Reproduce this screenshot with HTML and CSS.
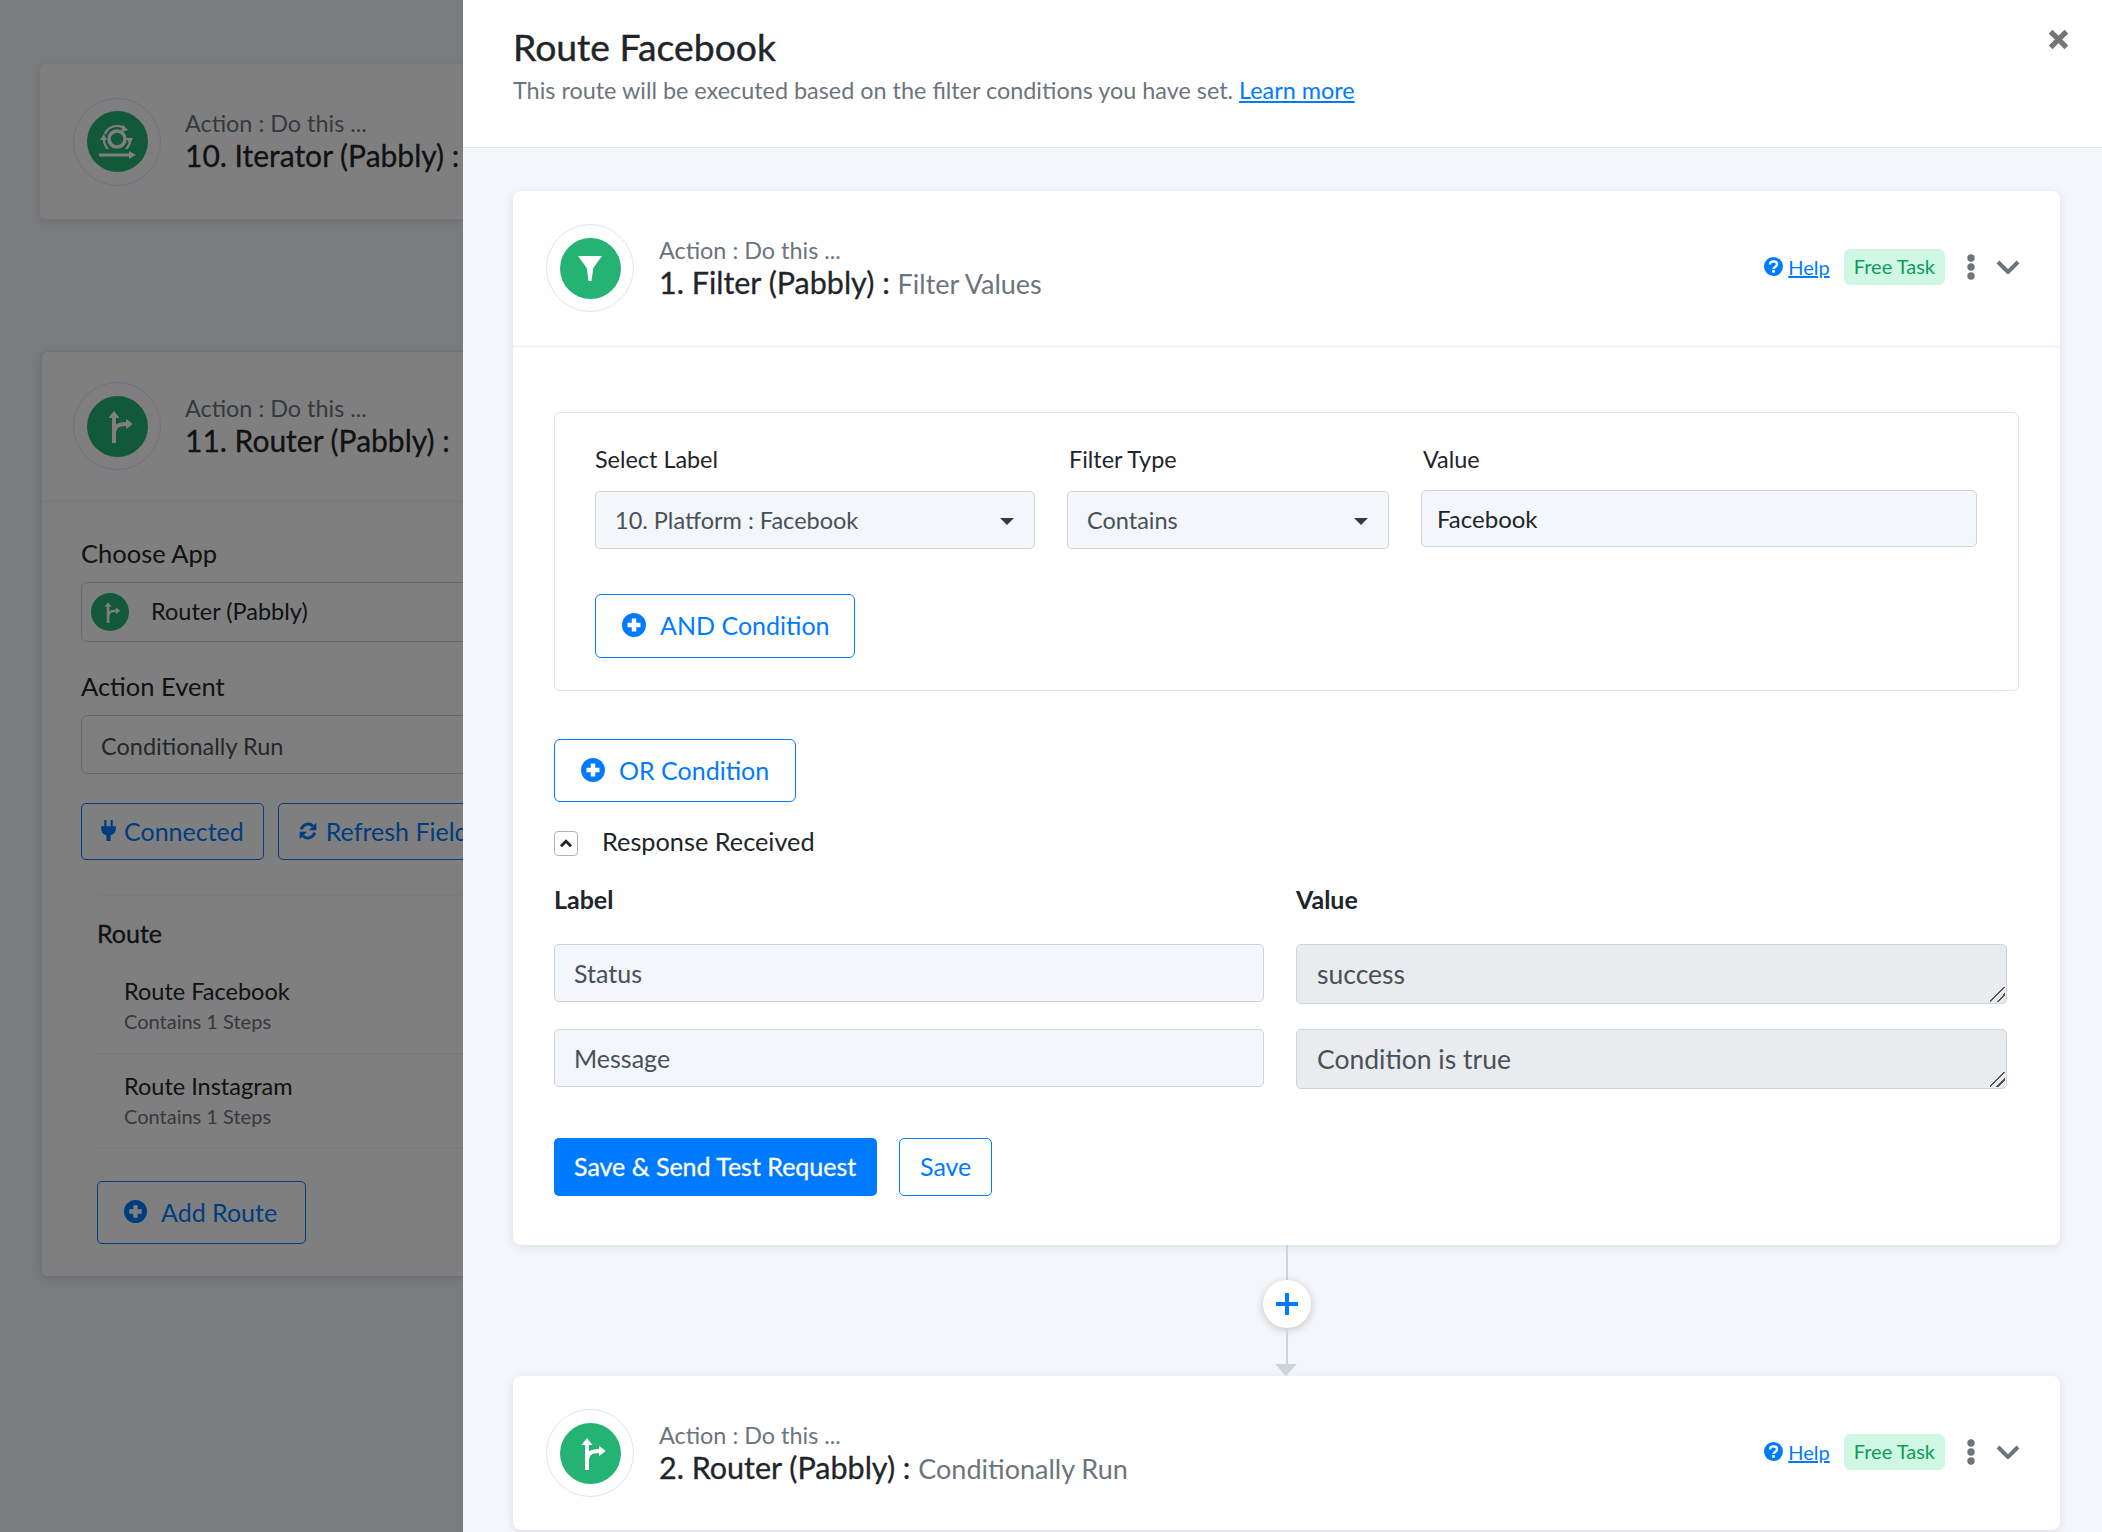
FILE: index.html
```html
<!DOCTYPE html>
<html>
    <head>
        <meta charset="utf-8">
        <title>Route Facebook</title>
        <link rel="stylesheet" href="styles.css">
    </head>
    <body>
        <svg class="defs" width="0" height="0">
            <symbol id="i-router" viewBox="-15 -17 30 34">
                <path d="M-3-9V17M-3 9C-3 0 1-2 9-2" fill="none" stroke="#fff" stroke-width="4"/>
                <path d="M-3-15l5.500 7h-11zM9-7l7 5-7 5z" fill="#fff"/>
            </symbol>
            <symbol id="i-iterator" viewBox="0 0 38 34">
                <circle cx="19" cy="14" r="8" fill="none" stroke="#fff" stroke-width="3.500"/>
                <path d="M7 9A13 13 0 0 1 26 3M32 13A13 13 0 0 1 28 24M10 24A13 13 0 0 1 6 15" fill="none" stroke="#fff" stroke-width="2.200"/>
                <path d="M25 0l5 5-7 2zM28 13h7l-3 6zM2 15h7l-3-6z" fill="#fff"/>
                <path d="M1 30h31" stroke="#fff" stroke-width="3"/>
                <path d="M31 26l7 4-7 4z" fill="#fff"/>
            </symbol>
            <symbol id="i-plus" viewBox="0 0 24 24">
                <circle cx="12" cy="12" r="12" fill="#007bff"/>
                <path d="M12 5.500v13M5.500 12h13" stroke="#fff" stroke-width="4.500"/>
            </symbol>
            <symbol id="i-help" viewBox="0 0 24 24">
                <circle cx="12" cy="12" r="12" fill="#007bff"/>
                <path d="M7.500 9.500C7.500 7 9.500 5.500 12 5.500s4.500 1.500 4.500 3.800c0 3.200-4.500 3.200-4.500 5.700" fill="none" stroke="#fff" stroke-width="3"/>
                <rect x="10.300" y="16.500" width="3.400" height="3.400" fill="#fff"/>
            </symbol>
            <symbol id="i-more" viewBox="0 0 10 26">
                <circle cx="5" cy="4" r="3.700" fill="#6c757d"/>
                <circle cx="5" cy="13" r="3.700" fill="#6c757d"/>
                <circle cx="5" cy="22" r="3.700" fill="#6c757d"/>
            </symbol>
            <symbol id="i-chevron" viewBox="0 0 24 14">
                <path d="M2 2l10 10L22 2" fill="none" stroke="#6c757d" stroke-width="4"/>
            </symbol>
        </svg>

        <!-- page behind the drawer -->
        <main class="page">
            <section class="flow-card">
                <div class="flow-head">
                    <div class="ring"><span class="app-icon dark"><svg width="38" height="34"><use href="#i-iterator"/></svg></span></div>
                    <div class="head-text">
                        <div class="head-small">Action : Do this ...</div>
                        <div class="head-title">10. Iterator (Pabbly) :</div>
                    </div>
                </div>
            </section>
            <section class="flow-card second">
                <div class="flow-head ruled">
                    <div class="ring"><span class="app-icon dark"><svg width="30" height="34"><use href="#i-router"/></svg></span></div>
                    <div class="head-text">
                        <div class="head-small">Action : Do this ...</div>
                        <div class="head-title">11. Router (Pabbly) :</div>
                    </div>
                </div>
                <div class="flow-body">
                    <div class="page-label">Choose App</div>
                    <div class="page-field app">
                        <span class="mini-icon"><svg width="20" height="22"><use href="#i-router"/></svg></span>
                        <span class="app-name">Router (Pabbly)</span>
                    </div>
                    <div class="page-label">Action Event</div>
                    <div class="page-field muted">Conditionally Run</div>
                    <div class="page-actions">
                        <a class="page-btn">
                            <svg width="15" height="21" viewBox="0 0 14 20"><path d="M3 0h2v6H3zM9 0h2v6H9zM0 6h14v3a7 7 0 0 1-5 5.500V20H5v-5.500A7 7 0 0 1 0 9z" fill="#007bff"/></svg>
                            Connected
                        </a>
                        <a class="page-btn">
                            <svg width="20" height="20" viewBox="0 0 24 24"><path d="M4 10A8.500 8.500 0 0 1 18 6M20 14A8.500 8.500 0 0 1 6 18" fill="none" stroke="#007bff" stroke-width="3.500"/><path d="M22 2v9h-9zM2 22v-9h9z" fill="#007bff"/></svg>
                            Refresh Fields
                        </a>
                    </div>
                    <div class="route-list">
                        <div class="route-title">Route</div>
                        <div class="route-row">
                            <div class="route-name">Route Facebook</div>
                            <div class="route-steps">Contains 1 Steps</div>
                        </div>
                        <div class="route-row">
                            <div class="route-name">Route Instagram</div>
                            <div class="route-steps">Contains 1 Steps</div>
                        </div>
                        <a class="page-btn add">
                            <svg width="23" height="23"><use href="#i-plus"/></svg>
                            Add Route
                        </a>
                    </div>
                </div>
            </section>
        </main>
        <div class="overlay"></div>

        <!-- drawer -->
        <aside class="drawer">
            <header class="drawer-head">
                <h1>Route Facebook</h1>
                <p>This route will be executed based on the filter conditions you have set. <a href="#">Learn more</a></p>
                <svg class="close" width="21" height="21" viewBox="0 0 20 20"><path d="M2.500 2.500l15 15M17.500 2.500l-15 15" stroke="#757575" stroke-width="5"/></svg>
            </header>
            <div class="drawer-body">
                <section class="card">
                    <div class="card-head ruled">
                        <div class="ring"><span class="app-icon">
                            <svg width="26" height="27" viewBox="0 0 26 27"><path d="M1 1h24l-8 11q-1 1-1 3l-1.500 11h-3L10 15q0-2-1-3z" fill="#fff"/></svg>
                        </span></div>
                        <div class="head-text">
                            <div class="head-small">Action : Do this ...</div>
                            <div class="head-title">1. Filter (Pabbly) : <span class="head-sub">Filter Values</span></div>
                        </div>
                        <div class="head-tools">
                            <svg width="19" height="19"><use href="#i-help"/></svg>
                            <a class="help" href="#">Help</a>
                            <span class="badge">Free Task</span>
                            <svg class="more" width="10" height="26"><use href="#i-more"/></svg>
                            <svg width="24" height="14"><use href="#i-chevron"/></svg>
                        </div>
                    </div>
                    <div class="card-body">
                        <div class="cond-box">
                            <div class="cond-row">
                                <div class="cond-col">
                                    <label>Select Label</label>
                                    <div class="field select">10. Platform : Facebook<i class="caret"></i></div>
                                </div>
                                <div class="cond-col">
                                    <label>Filter Type</label>
                                    <div class="field select">Contains<i class="caret"></i></div>
                                </div>
                                <div class="cond-col">
                                    <label>Value</label>
                                    <div class="field value">Facebook</div>
                                </div>
                            </div>
                            <a class="btn-line and"><svg width="24" height="24"><use href="#i-plus"/></svg>AND Condition</a>
                        </div>
                        <a class="btn-line or"><svg width="24" height="24"><use href="#i-plus"/></svg>OR Condition</a>
                        <div class="response-toggle">
                            <span class="toggle"><svg width="14" height="9" viewBox="0 0 12 8"><path d="M1.500 6.500L6 2l4.500 4.500" fill="none" stroke="#212529" stroke-width="2.400"/></svg></span>
                            <span class="toggle-text">Response Received</span>
                        </div>
                        <div class="resp-grid">
                            <div class="resp-label">Label</div>
                            <div class="resp-label">Value</div>
                            <div class="field plain">Status</div>
                            <div class="field area">success<i class="grip"></i></div>
                            <div class="field plain">Message</div>
                            <div class="field area">Condition is true<i class="grip"></i></div>
                        </div>
                        <div class="card-actions">
                            <a class="btn-solid">Save &amp; Send Test Request</a>
                            <a class="btn-save">Save</a>
                        </div>
                    </div>
                </section>

                <div class="connector">
                    <span class="line top"></span>
                    <span class="add-step"><svg width="22" height="22" viewBox="0 0 22 22"><path d="M11 1v20M1 11h20" stroke="#007bff" stroke-width="4" stroke-linecap="round"/></svg></span>
                    <span class="line"></span>
                    <span class="arrow"></span>
                </div>

                <section class="card">
                    <div class="card-head">
                        <div class="ring"><span class="app-icon"><svg width="30" height="34"><use href="#i-router"/></svg></span></div>
                        <div class="head-text">
                            <div class="head-small">Action : Do this ...</div>
                            <div class="head-title">2. Router (Pabbly) : <span class="head-sub">Conditionally Run</span></div>
                        </div>
                        <div class="head-tools">
                            <svg width="19" height="19"><use href="#i-help"/></svg>
                            <a class="help" href="#">Help</a>
                            <span class="badge">Free Task</span>
                            <svg class="more" width="10" height="26"><use href="#i-more"/></svg>
                            <svg width="24" height="14"><use href="#i-chevron"/></svg>
                        </div>
                    </div>
                </section>
            </div>
        </aside>
    </body>
</html>
```

FILE: styles.css
```css
*{
    margin: 0;
    padding: 0;
    box-sizing: border-box;
}
html,body{
    height: 100%;
    overflow: hidden;
}
body{
    position: relative;
    height: 1532px;
    background: #f3f6fa;
    font-family: "Lato", "Liberation Sans", sans-serif;
    color: #212529;
}
.defs{
    position: absolute;
}
a{
    text-decoration: none;
}

/* page behind */
.page{
    padding: 64px 0 0 40px;
    width: 1500px;
}
.flow-card{
    background: #fff;
    border-radius: 6px;
    box-shadow: 0 2px 10px rgba(0,0,0,.1);
    height: 155px;
    overflow: hidden;
}
.flow-card.second{
    margin: 132px 0 0 1px;
    height: 926px;
    border: 1px solid #d5e2f8;
}
.flow-head{
    display: flex;
    align-items: center;
    height: 155px;
    padding-left: 33px;
}
.flow-head .head-text{
    margin: -1px 0 0 24px;
}
.flow-head .head-title{
    font-size: 30px;
}
.flow-head.ruled{
    height: 151px;
    border-bottom: 3px solid #f3f6fa;
    padding-left: 31px;
}
.flow-body{
    padding: 34px 0 0 39px;
}
.page-label{
    font-size: 25.5px;
    line-height: 32px;
    color: #212529;
}
.page-field{
    display: flex;
    align-items: center;
    height: 60px;
    margin: 13px 0 28px;
    border: 1px solid #ced4da;
    border-radius: 6px;
    font-size: 23.5px;
}
.page-field.app{
    padding-left: 9px;
    gap: 22px;
}
.app-name{
    margin-top: -3px;
}
.page-field.muted{
    padding: 2px 0 0 19px;
    height: 59px;
    color: #495057;
    margin-bottom: 29px;
}
.mini-icon{
    display: flex;
    align-items: center;
    justify-content: center;
    width: 38px;
    height: 38px;
    border-radius: 50%;
    background: #25b374;
}
.page-actions{
    display: flex;
    gap: 14px;
}
.page-btn{
    display: inline-flex;
    align-items: center;
    gap: 8px;
    height: 57px;
    padding: 0 19px 2px;
    border: 1px solid #007bff;
    border-radius: 5px;
    font-size: 25px;
    color: #007bff;
}
.route-list{
    margin: 33px 0 0 16px;
    border-top: 3px solid #f3f6fa;
}
.route-title{
    margin-top: 21px;
    font-size: 25px;
    line-height: 32px;
    -webkit-text-stroke: .3px #212529;
}
.route-row{
    padding: 26px 0 19px 27px;
    border-bottom: 2px solid #f3f6fa;
}
.route-row + .route-row{
    padding: 15px 0 18px 27px;
}
.route-name{
    font-size: 23.5px;
    line-height: 32px;
}
.route-steps{
    margin-top: 1px;
    font-size: 20px;
    line-height: 26px;
    color: #6c757d;
}
.page-btn.add{
    margin-top: 32px;
    height: 63px;
    padding: 0 28px 2px 26px;
    gap: 14px;
}
.overlay{
    position: absolute;
    inset: 0;
    background: rgba(0,0,0,.5);
}

/* drawer */
.drawer{
    position: absolute;
    top: 0;
    right: 0;
    bottom: 0;
    left: 463px;
    background: #f3f6fa;
    overflow: hidden;
}
.drawer-head{
    position: relative;
    height: 148px;
    padding: 24px 50px 0;
    background: #fff;
    border-bottom: 1px solid #dfe6f3;
}
.drawer-head h1{
    font-size: 37.3px;
    line-height: 46px;
    font-weight: 400;
    -webkit-text-stroke: .4px #212529;
    color: #212529;
}
.drawer-head p{
    margin-top: 5px;
    font-size: 23.4px;
    line-height: 30px;
    color: #6c757d;
}
.drawer-head p a{
    color: #007bff;
    text-decoration: underline;
}
.close{
    position: absolute;
    top: 29px;
    right: 33px;
}
.drawer-body{
    padding: 43px 42px 0 50px;
}
.card{
    background: #fff;
    border-radius: 8px;
    box-shadow: 0 2px 10px rgba(0,0,0,.1);
}
.card-head{
    display: flex;
    align-items: center;
    height: 154px;
    padding: 0 40px 0 33px;
}
.card-head.ruled{
    height: 157px;
    border-bottom: 3px solid #f3f6fa;
}
.ring{
    display: flex;
    align-items: center;
    justify-content: center;
    flex: none;
    width: 88px;
    height: 88px;
    border: 1px solid #d9e5ff;
    border-radius: 50%;
}
.app-icon{
    display: flex;
    align-items: center;
    justify-content: center;
    width: 61px;
    height: 61px;
    border-radius: 50%;
    background: #25b374;
}
.head-text{
    margin: 2px 0 0 25px;
}
.head-small{
    font-size: 23.4px;
    line-height: 28px;
    color: #6c757d;
}
.head-title{
    font-size: 30.5px;
    line-height: 36px;
    -webkit-text-stroke: .3px #212529;
    color: #212529;
}
.head-sub{
    font-size: 27px;
    -webkit-text-stroke: 0;
    color: #6c757d;
}
.head-tools{
    display: flex;
    align-items: center;
    margin: -3px 0 0 auto;
}
.help{
    margin-left: 5px;
    font-size: 20px;
    color: #007bff;
    text-decoration: underline;
}
.badge{
    margin-left: 14px;
    padding: 0 10px;
    height: 36px;
    line-height: 34px;
    border-radius: 6px;
    background: #d0f7e4;
    color: #0f9d58;
    font-size: 20px;
}
.more{
    margin: 0 20px 0 21px;
}

.card-body{
    padding: 64px 41px 49px 41px;
}
.cond-box{
    padding: 32px 41px 32px 40px;
    border: 1px solid #d9e5ff;
    border-radius: 6px;
}
.cond-row{
    display: grid;
    grid-template-columns: 440px 322px 1fr;
    gap: 32px;
}
.cond-col label{
    display: block;
    height: 28px;
    margin-bottom: 18px;
    font-size: 23.4px;
    line-height: 28px;
    color: #212529;
}
.cond-col + .cond-col label{
    padding-left: 2px;
}
.field{
    position: relative;
    display: flex;
    align-items: center;
    height: 58px;
    padding: 0 19px;
    border: 1px solid #ced4da;
    border-radius: 5px;
    background: #f3f6fa;
    font-size: 23.5px;
    color: #495057;
}
.field.value{
    margin-top: -1px;
    height: 57px;
    padding: 0 15px;
    font-size: 24px;
    color: #212529;
}
.field.plain{
    font-size: 25px;
}
.caret{
    position: absolute;
    top: 26px;
    right: 20px;
    border: 7px solid transparent;
    border-top: 7px solid #343a40;
    border-bottom: 0;
}
.btn-line{
    display: inline-flex;
    align-items: center;
    gap: 14px;
    height: 64px;
    padding-bottom: 2px;
    border: 1px solid #007bff;
    border-radius: 6px;
    color: #007bff;
    font-size: 25px;
}
.btn-line.and{
    margin-top: 45px;
    width: 260px;
    padding-left: 26px;
}
.btn-line.or{
    margin-top: 48px;
    width: 242px;
    height: 63px;
    padding-left: 26px;
}
.response-toggle{
    display: flex;
    align-items: center;
    gap: 24px;
    height: 25px;
    margin-top: 29px;
    font-size: 25.3px;
    color: #212529;
}
.toggle-text{
    margin-top: -6px;
}
.toggle{
    display: flex;
    align-items: center;
    justify-content: center;
    width: 24px;
    height: 25px;
    border: 1px solid #adb5bd;
    border-radius: 4px;
}
.resp-grid{
    display: grid;
    grid-template-columns: 710px 711px;
    column-gap: 32px;
    row-gap: 25px;
    align-items: start;
    margin-top: 30px;
}
.resp-label{
    height: 28px;
    margin-bottom: 5px;
    font-size: 25px;
    line-height: 26px;
    font-weight: 700;
    color: #212529;
}
.field.area{
    height: 60px;
    background: #e9ecef;
    font-size: 26.5px;
    padding: 0 20px;
}
.grip{
    position: absolute;
    right: 1px;
    bottom: 1px;
    width: 15px;
    height: 15px;
    background: linear-gradient(135deg, transparent 45%, #555 45%, #555 52%, transparent 52%, transparent 70%, #555 70%, #555 77%, transparent 77%);
}
.card-actions{
    display: flex;
    gap: 22px;
    margin-top: 49px;
}
.btn-solid,
.btn-save{
    display: flex;
    align-items: center;
    height: 58px;
    padding: 0 20px 2px;
    border-radius: 5px;
    font-size: 25px;
}
.btn-solid{
    width: 323px;
    background: #007bff;
    color: #fff;
    -webkit-text-stroke: .3px #fff;
}
.btn-save{
    width: 93px;
    border: 1px solid #007bff;
    color: #007bff;
}

.connector{
    display: flex;
    flex-direction: column;
    align-items: center;
    height: 131px;
    padding-left: 1px;
}
.line{
    flex: 1;
    width: 2px;
    background: #ced4da;
}
.line.top{
    flex: none;
    height: 35px;
}
.add-step{
    display: flex;
    align-items: center;
    justify-content: center;
    flex: none;
    width: 48px;
    height: 48px;
    border-radius: 50%;
    background: #fff;
    box-shadow: 0 2px 8px rgba(0,0,0,.2);
}
.arrow{
    margin-left: -2px;
    border: 11px solid transparent;
    border-top: 12px solid #ced4da;
    border-bottom: 0;
}
```
